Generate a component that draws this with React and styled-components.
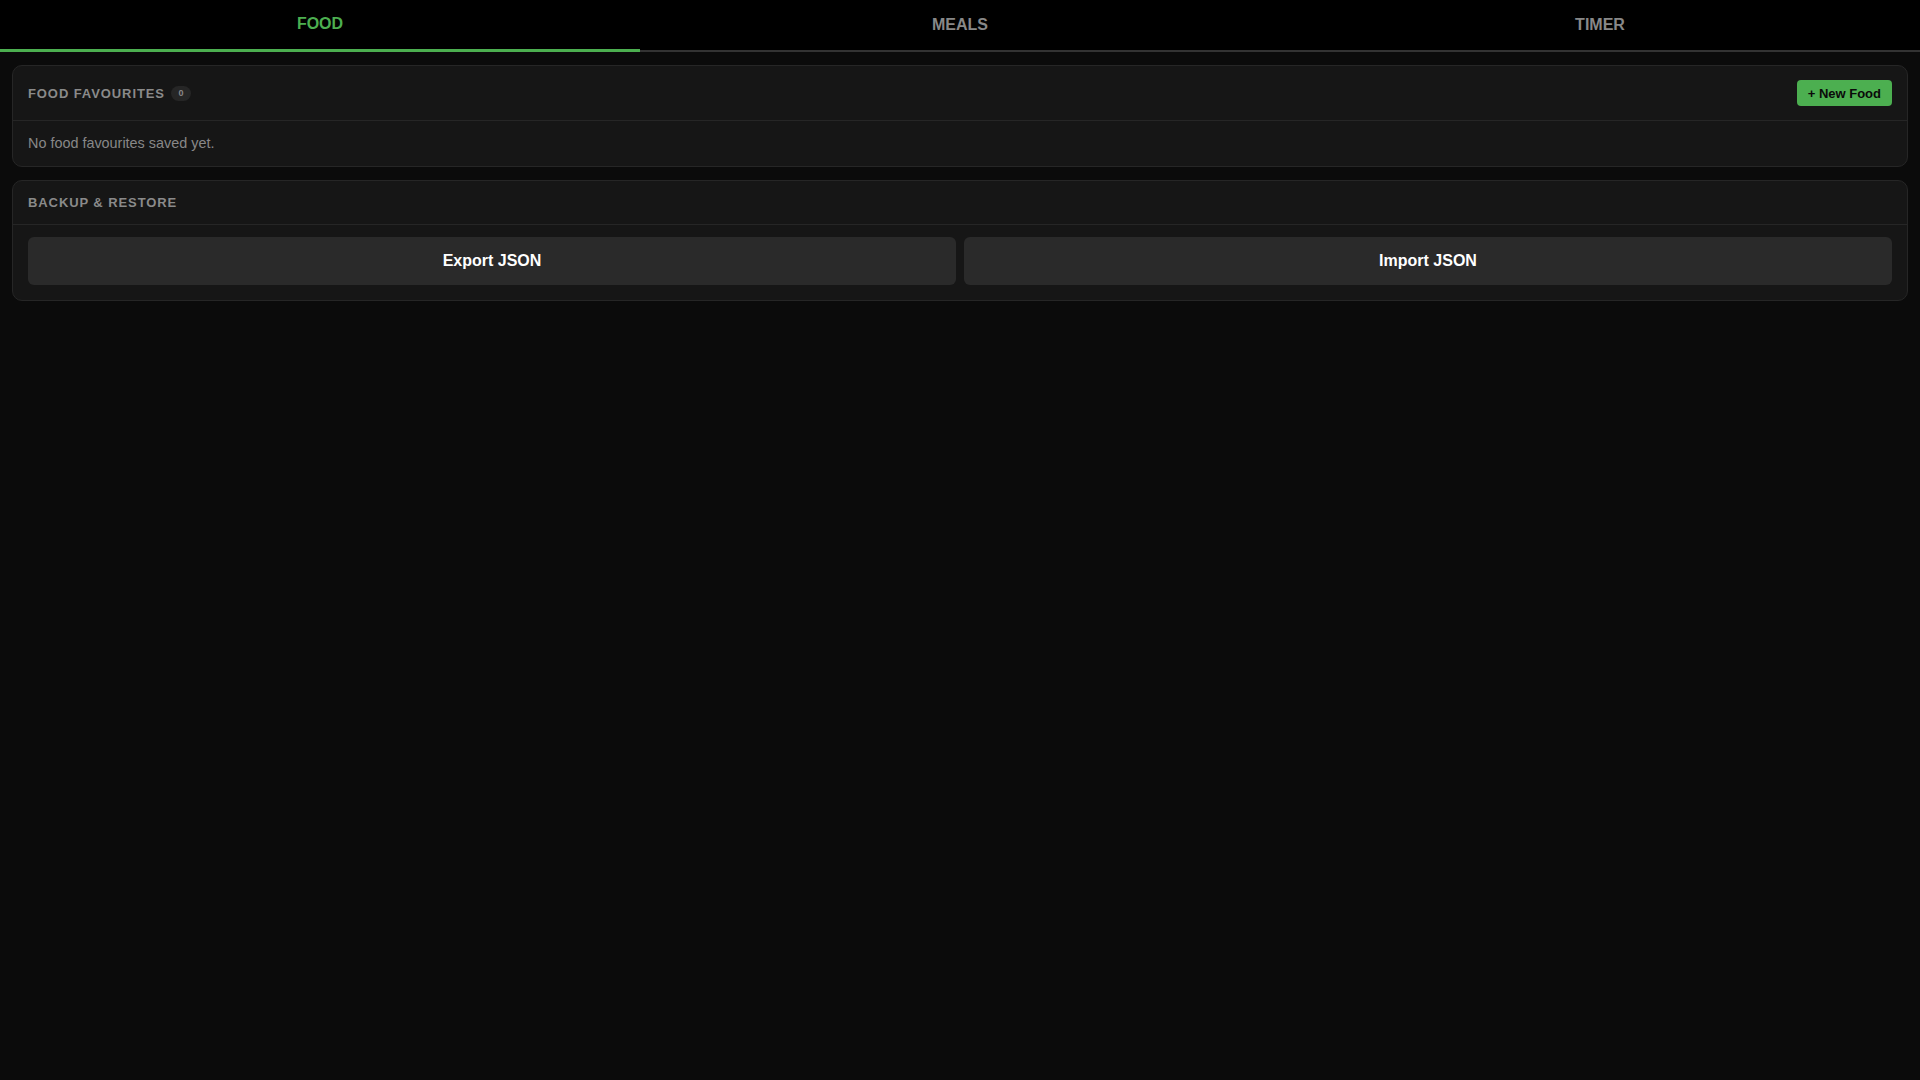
import React, { useState } from 'react';
import styled, { createGlobalStyle } from 'styled-components';

const GlobalStyle = createGlobalStyle`
  html, body {
    margin: 0;
    padding: 0;
    background: #0b0b0b;
    font-family: "Liberation Sans", Arial, sans-serif;
    color: #e6e6e6;
  }
  * { box-sizing: border-box; }
`;

const tabs = ['Food', 'Meals', 'Timer'];

const App = () => {
  const [active, setActive] = useState('Food');
  const favourites = [];

  return (
    <>
      <GlobalStyle />
      <Page>
        <TabBar>
          {tabs.map((t) => (
            <Tab key={t} active={t === active} onClick={() => setActive(t)}>
              {t}
            </Tab>
          ))}
        </TabBar>

        <Content>
          <Card>
            <CardHeader>
              <Title>
                Food Favourites
                <Count>{favourites.length}</Count>
              </Title>
              <NewButton>+ New Food</NewButton>
            </CardHeader>
            <CardBody>
              <Empty>No food favourites saved yet.</Empty>
            </CardBody>
          </Card>

          <Card>
            <CardHeader>
              <Title>Backup &amp; Restore</Title>
            </CardHeader>
            <ButtonRow>
              <BigButton>Export JSON</BigButton>
              <BigButton>Import JSON</BigButton>
            </ButtonRow>
          </Card>
        </Content>
      </Page>
    </>
  );
};

export default App;

const Page = styled.div`
  min-height: 100vh;
  background: #0b0b0b;
`;

const TabBar = styled.nav`
  display: grid;
  grid-template-columns: repeat(3, 1fr);
  background: #000;
  border-bottom: 2px solid #333;
`;

const Tab = styled.button`
  height: 52px;
  margin-bottom: -2px;
  background: none;
  border: none;
  border-bottom: 3px solid ${(p) => (p.active ? '#4caf50' : 'transparent')};
  padding: ${(p) => (p.active ? '0 0 2px' : '0')};
  color: ${(p) => (p.active ? '#4caf50' : '#888')};
  font-family: inherit;
  font-size: 16px;
  font-weight: 700;
  text-transform: uppercase;
  cursor: pointer;
`;

const Content = styled.main`
  display: flex;
  flex-direction: column;
  gap: 13px;
  padding: 13px 12px;
`;

const Card = styled.section`
  background: #161616;
  border: 1px solid #262626;
  border-radius: 10px;
  overflow: hidden;
`;

const CardHeader = styled.header`
  display: flex;
  align-items: center;
  justify-content: space-between;
  padding: 14px 15px;
  border-bottom: 1px solid #262626;
`;

const Title = styled.h2`
  display: flex;
  align-items: center;
  gap: 6px;
  margin: 0;
  font-size: 13px;
  font-weight: 700;
  letter-spacing: 0.07em;
  text-transform: uppercase;
  color: #8a8a8a;
  line-height: 15px;
`;

const Count = styled.span`
  display: inline-flex;
  align-items: center;
  justify-content: center;
  min-width: 20px;
  height: 15px;
  padding: 0 6px;
  border-radius: 8px;
  background: #262626;
  color: #888;
  font-size: 9px;
  letter-spacing: 0;
`;

const NewButton = styled.button`
  height: 26px;
  padding: 0 11px;
  border: none;
  border-radius: 4px;
  background: #4caf50;
  color: #0a0a0a;
  font-family: inherit;
  font-size: 13px;
  font-weight: 700;
  cursor: pointer;
`;

const CardBody = styled.div`
  padding: 14px 15px 14px;
`;

const Empty = styled.p`
  margin: 0;
  font-size: 14.4px;
  line-height: 17px;
  color: #888;
`;

const ButtonRow = styled.div`
  display: grid;
  grid-template-columns: 1fr 1fr;
  gap: 8px;
  padding: 12px 15px 15px;
`;

const BigButton = styled.button`
  height: 48px;
  border: none;
  border-radius: 6px;
  background: #2a2a2a;
  color: #fff;
  font-family: inherit;
  font-size: 16px;
  font-weight: 700;
  cursor: pointer;
`;
